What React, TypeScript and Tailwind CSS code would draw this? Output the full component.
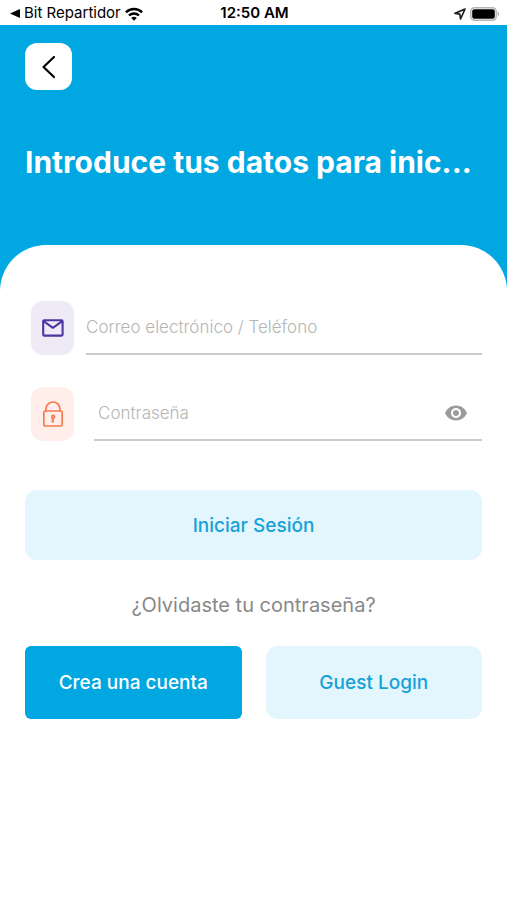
import { useState } from "react";

export default function App() {
  const [showPassword, setShowPassword] = useState(false);

  return (
    <div className="min-h-screen bg-white font-['Inter',sans-serif]">
      <StatusBar />

      <div className="bg-[#00a7e1]">
        <header className="h-[220px] px-[25px] pt-[18px]">
          <button
            type="button"
            aria-label="Atrás"
            className="flex h-[47px] w-[47px] items-center justify-center rounded-xl bg-white"
          >
            <svg width="16" height="24" viewBox="0 0 16 24" fill="none" stroke="#000" strokeWidth="2.2" strokeLinecap="round" strokeLinejoin="round">
              <path d="M13 2 2.5 12 13 22" />
            </svg>
          </button>
          <h1 className="mt-[52px] whitespace-nowrap text-3xl leading-10 font-bold text-white">
            Introduce tus datos para inic...
          </h1>
        </header>

        <main className="rounded-t-[46px] bg-white px-[25px] pt-14">
          <form onSubmit={(e) => e.preventDefault()}>
            {/* Email */}
            <div className="flex h-[54px] gap-3 pl-1.5">
              <label htmlFor="email" aria-label="Correo electrónico / Teléfono" className="flex w-[43px] shrink-0 items-center justify-center rounded-xl bg-[#eeebf7]">
                <MailIcon />
              </label>
              <input
                id="email"
                type="text"
                placeholder="Correo electrónico / Teléfono"
                className="min-w-0 flex-1 border-b-2 border-[#cbcbcb] pt-0.5 text-[17px] font-light text-gray-700 outline-none placeholder:text-[#b5b5b5]"
              />
            </div>

            {/* Password */}
            <div className="mt-8 flex h-[54px] gap-5 pl-1.5">
              <label htmlFor="password" aria-label="Contraseña" className="flex w-[43px] shrink-0 items-center justify-center rounded-xl bg-[#ffeeea]">
                <LockIcon />
              </label>
              <div className="flex min-w-0 flex-1 items-center border-b-2 border-[#cbcbcb] pr-3.5 pl-1">
                <input
                  id="password"
                  type={showPassword ? "text" : "password"}
                  placeholder="Contraseña"
                  className="min-w-0 flex-1 pt-0.5 text-[17px] font-light text-gray-700 outline-none placeholder:text-[#b5b5b5]"
                />
                <button type="button" aria-label="Mostrar contraseña" onClick={() => setShowPassword(!showPassword)}>
                  <EyeIcon />
                </button>
              </div>
            </div>

            <button type="submit" className="mt-[49px] h-[70px] w-full rounded-xl bg-[#e3f6fd] pt-0.5 text-[19px] font-medium text-[#16a2d8]">
              Iniciar Sesión
            </button>
          </form>

          <div className="mt-[31px] text-center">
            <a href="#" className="text-xl leading-7 text-[#888]">
              ¿Olvidaste tu contraseña?
            </a>
          </div>

          <div className="mt-[27px] grid grid-cols-2 gap-6">
            <button type="button" className="h-[73px] rounded-md bg-[#00a7e1] pt-0.5 text-[19px] font-medium text-white">
              Crea una cuenta
            </button>
            <button type="button" className="h-[73px] rounded-xl bg-[#e3f6fd] pt-0.5 text-[19px] font-medium text-[#16a2d8]">
              Guest Login
            </button>
          </div>
        </main>
      </div>
    </div>
  );
}

function StatusBar() {
  return (
    <div className="grid h-[25px] grid-cols-[1fr_auto_1fr] items-center bg-white pt-0.5 pr-[7px] pl-[9px] text-[15px] text-black">
      <div className="flex items-center gap-1">
        <svg width="11" height="9" viewBox="0 0 11 9">
          <path d="M1 4.5 11 0v9z" />
        </svg>
        <span className="whitespace-nowrap">Bit Repartidor</span>
        <svg width="18" height="14" viewBox="0 0 18 14" fill="none" stroke="#000" strokeWidth="2.4">
          <path d="M.9 5.3a11.5 11.5 0 0 1 16.2 0" />
          <path d="M4 8.5a7.1 7.1 0 0 1 10 0" />
          <path d="M9 13.8 6.2 11a4 4 0 0 1 5.6 0z" fill="#000" stroke="none" />
        </svg>
      </div>
      <span className="font-semibold">12:50 AM</span>
      <div className="flex items-center justify-end gap-1">
        <svg width="12" height="12" viewBox="0 0 12 12" fill="none" stroke="#222" strokeWidth="1.7" strokeLinejoin="round">
          <path d="M11 1 1 5.4l4.8.8.8 4.8z" />
        </svg>
        <svg width="30" height="14" viewBox="0 0 30 14">
          <rect x=".8" y=".8" width="25.4" height="12.4" rx="3.6" fill="#fff" stroke="#b4b4b4" strokeWidth="1.4" />
          <rect x="2.2" y="2.2" width="22.6" height="9.6" rx="2" />
          <path d="M27.6 4.6c2.2.9 2.2 3.9 0 4.8z" fill="#b4b4b4" />
        </svg>
      </div>
    </div>
  );
}

function MailIcon() {
  return (
    <svg width="22" height="18" viewBox="0 0 22 18" fill="none" stroke="#4a36a0" strokeWidth="2.1" strokeLinejoin="round">
      <rect x="1.2" y="1.2" width="19.4" height="15.4" rx="1" />
      <path d="m1.6 2.2 9.3 6.6 9.3-6.6" />
    </svg>
  );
}

function LockIcon() {
  return (
    <svg width="22" height="26" viewBox="0 0 22 26" fill="none" stroke="#f47b50" strokeWidth="1.7" strokeLinecap="round" strokeLinejoin="round">
      <path d="M4 10V8a7 7 0 0 1 14 0v2" />
      <rect x="1.8" y="10" width="18.4" height="15" rx="1.6" />
      <circle cx="11.2" cy="15.8" r="1.4" />
      <path d="M11.2 17.3v3.5M11.2 18.6H9.8M11.2 20.8H9.8" strokeWidth="1.4" />
    </svg>
  );
}

function EyeIcon() {
  return (
    <svg width="24" height="24" viewBox="0 0 24 24" fill="#9b9b9b">
      <path d="M12 4.500C7 4.500 2.730 7.610 1 12c1.730 4.390 6 7.500 11 7.500s9.270-3.110 11-7.500c-1.730-4.390-6-7.500-11-7.500zM12 17c-2.760 0-5-2.240-5-5s2.240-5 5-5 5 2.240 5 5-2.240 5-5 5zm0-8c-1.660 0-3 1.340-3 3s1.340 3 3 3 3-1.340 3-3-1.340-3-3-3z" />
    </svg>
  );
}
